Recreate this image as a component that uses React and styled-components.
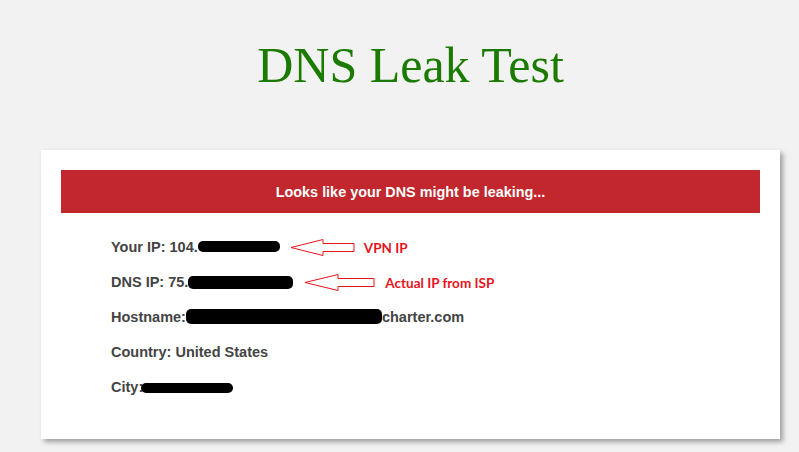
import React from 'react';
import styled, { createGlobalStyle } from 'styled-components';

const GlobalStyle = createGlobalStyle`
    body {
        margin: 0;
        background: #f2f2f2;
        font-family: 'Liberation Sans', Arial, sans-serif;
    }
`;

const Page = styled.div`
    width: 799px;
    height: 452px;
    overflow: hidden;
`;

const Title = styled.h1`
    margin: 37px 0 0 41px;
    width: 739px;
    text-align: center;
    font-family: 'Liberation Serif', 'Times New Roman', serif;
    font-weight: normal;
    font-size: 50px;
    line-height: 56px;
    color: #1b7b00;
`;

const Card = styled.div`
    margin: 57px 0 0 41px;
    width: 739px;
    box-sizing: border-box;
    padding: 20px 20px 35px;
    background: #fff;
    box-shadow: 3px 3px 5px rgba(0, 0, 0, 0.35);
`;

const Banner = styled.div`
    height: 43px;
    display: flex;
    align-items: center;
    justify-content: center;
    background: #c1272d;
    color: #fff;
    font-weight: bold;
    font-size: 14.4px;
`;

const List = styled.div`
    margin-top: 16px;
    padding-left: 50px;
    display: flex;
    flex-direction: column;
`;

const Row = styled.div`
    height: 35px;
    display: flex;
    align-items: center;
    font-weight: bold;
    font-size: 14.5px;
    color: #444;
    white-space: nowrap;
`;

const Redacted = styled.span`
    display: inline-block;
    width: ${(p) => p.w}px;
    height: ${(p) => p.h || 12}px;
    margin-left: ${(p) => p.ml || 0}px;
    margin-top: ${(p) => p.mt || 0}px;
    background: #000;
    border-radius: 5px;
`;

const Arrow = styled.svg`
    margin-left: ${(p) => p.gap}px;
    margin-top: 2px;
    flex: none;
`;

const Note = styled.span`
    margin-left: ${(p) => p.gap}px;
    margin-top: 2px;
    font-family: Lato, 'Open Sans', sans-serif;
    font-weight: bold;
    font-size: 13.5px;
    color: #e8141c;
`;

const LeftArrow = ({ width, head, gap }) => (
    <Arrow gap={gap} width={width} height={19} viewBox={`0 0 ${width} 19`}>
        <path
            d={`M1 9.5 L${head} 1.5 L${head} 5.5 L${width - 1} 5.5 L${width - 1} 13.5 L${head} 13.5 L${head} 17.5 Z`}
            fill="none"
            stroke="#e8141c"
            strokeWidth="1"
        />
    </Arrow>
);

export default function App() {
    return (
        <Page>
            <GlobalStyle />
            <Title>DNS Leak Test</Title>
            <Card>
                <Banner>Looks like your DNS might be leaking...</Banner>
                <List>
                    <Row>
                        Your IP: 104.
                        <Redacted w={82} h={11} />
                        <LeftArrow width={65} head={33} gap={10} />
                        <Note gap={9}>VPN IP</Note>
                    </Row>
                    <Row>
                        DNS IP: 75.
                        <Redacted w={105} h={13} mt={2} />
                        <LeftArrow width={71} head={34} gap={11} />
                        <Note gap={10}>Actual IP from ISP</Note>
                    </Row>
                    <Row>
                        Hostname:
                        <Redacted w={196} h={15} />
                        charter.com
                    </Row>
                    <Row>Country: United States</Row>
                    <Row>
                        City:
                        <Redacted w={92} h={10} ml={-2} mt={2} />
                    </Row>
                </List>
            </Card>
        </Page>
    );
}
